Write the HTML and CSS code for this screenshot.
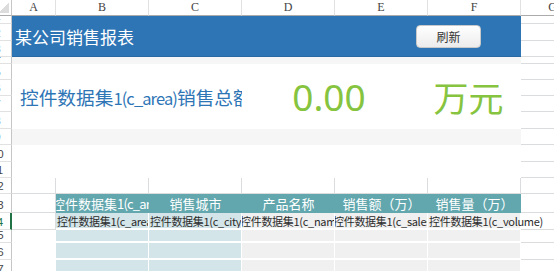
FILE: index.html
```html
<!DOCTYPE html>
<html lang="zh-CN">
<head>
  <meta charset="UTF-8" />
  <meta name="viewport" content="width=device-width, initial-scale=1.0" />
  <title>某公司销售报表</title>
  <link rel="stylesheet" href="styles.css">
</head>
<body>
  <div class="sheet">
    <!-- column headers -->
    <div class="corner"></div>
    <div class="col">A</div>
    <div class="col">B</div>
    <div class="col">C</div>
    <div class="col">D</div>
    <div class="col">E</div>
    <div class="col">F</div>
    <div class="col">G</div>

    <!-- merged blocks -->
    <div class="bar">
      <span class="title">某公司销售报表</span>
      <button class="refresh">刷新</button>
    </div>
    <div class="band band-top"></div>
    <div class="total-label"><span>控件数据集<span class="latin">1(c_area)</span>销售总额</span></div>
    <div class="total-value">0.00</div>
    <div class="total-unit">万元</div>
    <div class="band band-bottom"></div>
    <div class="blank"></div>

    <!-- rows 1-11 -->
    <div class="rh">1</div><div class="c"></div>
    <div class="rh">2</div><div class="c"></div>
    <div class="rh">3</div><div class="c"></div>
    <div class="rh">4</div><div class="c"></div>
    <div class="rh">5</div><div class="c"></div>
    <div class="rh">6</div><div class="c"></div>
    <div class="rh">7</div><div class="c"></div>
    <div class="rh">8</div><div class="c"></div>
    <div class="rh">9</div><div class="c"></div>
    <div class="rh">10</div><div class="c"></div>
    <div class="rh">11</div><div class="c"></div>

    <!-- row 12 -->
    <div class="rh">12</div>
    <div class="c"></div><div class="c"></div><div class="c"></div>
    <div class="c"></div><div class="c"></div><div class="c"></div>
    <div class="c"></div>

    <!-- row 13: table header -->
    <div class="rh">13</div>
    <div class="c"></div>
    <div class="th lead"><span>控件数据集<span class="latin">1(c_area)</span></span></div>
    <div class="th"><span>销售城市</span></div>
    <div class="th"><span>产品名称</span></div>
    <div class="th"><span>销售额（万）</span></div>
    <div class="th"><span>销售量（万）</span></div>
    <div class="c"></div>

    <!-- row 14: data -->
    <div class="rh sel">14</div>
    <div class="c"></div>
    <div class="td blue"><span>控件数据集1(c_area)</span></div>
    <div class="td blue"><span>控件数据集1(c_city)</span></div>
    <div class="td gray lead"><span>控件数据集1(c_name)</span></div>
    <div class="td gray lead"><span>控件数据集1(c_sales)</span></div>
    <div class="td gray spill"><span>控件数据集1(c_volume)</span></div>
    <div class="c"></div>

    <!-- rows 15-17 -->
    <div class="rh">15</div>
    <div class="w"></div>
    <div class="td blue"></div><div class="td blue"></div>
    <div class="td gray"></div><div class="td gray"></div><div class="td gray"></div>
    <div class="c"></div>

    <div class="rh">16</div>
    <div class="w"></div>
    <div class="td blue"></div><div class="td blue"></div>
    <div class="td gray"></div><div class="td gray"></div><div class="td gray"></div>
    <div class="c"></div>

    <div class="rh">17</div>
    <div class="w"></div>
    <div class="td blue"></div><div class="td blue"></div>
    <div class="td gray"></div><div class="td gray"></div><div class="td gray"></div>
    <div class="c"></div>
  </div>
</body>
</html>
```

FILE: styles.css
```css
* {
  box-sizing: border-box;
}
body {
  margin: 0;
  padding: 0;
  background: #fff;
  overflow: hidden;
  font-family: "Noto Sans CJK SC", sans-serif;
}
.sheet {
  margin-left: -16px;
  display: grid;
  grid-template-columns: 28px 44px repeat(5, 93px) 64px;
  grid-template-rows: 16px 8px 17px 16px 7px 16px 16px 16px 17px 16px 17px 16px 16px 19px 17px 13px 17px 17px;
}

/* headers */
.corner {
  border-right: 1px solid #c6c6c6;
  border-bottom: 1px solid #ababab;
  background: linear-gradient(to bottom right, transparent 50%, #dcdcdc 50%) no-repeat right 2px bottom 2px / 10px 10px;
}
.col {
  border-right: 1px solid #e1e1e1;
  border-bottom: 1px solid #ababab;
  font: 12px "Liberation Serif", serif;
  color: #444;
  display: flex;
  justify-content: center;
  align-items: center;
}
.rh {
  border-right: 1px solid #c6c6c6;
  border-bottom: 1px solid #e1e1e1;
  font: 11px "Liberation Sans", sans-serif;
  color: #444;
  display: flex;
  justify-content: center;
  align-items: flex-end;
  line-height: 13px;
  overflow: hidden;
}
.rh.sel {
  color: #217346;
  border-right: 2px solid #217346;
}
.c {
  border-right: 1px solid #dadcdd;
  border-bottom: 1px solid #dadcdd;
}
.w {
  background: #fff;
}

/* title bar */
.bar {
  grid-column: 2 / 8;
  grid-row: 2 / 5;
  background: #2e75b6;
  border-bottom: 1px solid #2a69a3;
  display: flex;
  align-items: center;
  justify-content: space-between;
  padding: 0 40px 0 3px;
}
.title {
  color: #fff;
  font-size: 17px;
}
.refresh {
  width: 65px;
  height: 23px;
  border: 1px solid #c9c9c9;
  border-radius: 4px;
  background: linear-gradient(#ffffff, #ececec);
  font: 12px "Noto Sans CJK SC", sans-serif;
  color: #333;
  padding: 0;
}

/* totals */
.band {
  grid-column: 2 / 8;
  background: #f6f6f6;
}
.band-top {
  grid-row: 5;
}
.band-bottom {
  grid-row: 10;
}
.blank {
  grid-column: 2 / 8;
  grid-row: 11 / 13;
  background: #fff;
}
.total-label {
  grid-column: 2 / 5;
  grid-row: 6 / 10;
  background: #fff;
  display: flex;
  align-items: center;
  padding-left: 8px;
  overflow: hidden;
  white-space: nowrap;
  color: #2e75b6;
  font-size: 18.7px;
}
.total-label .latin {
  font-size: 16.5px;
  letter-spacing: -0.9px;
}
.total-value,
.total-unit {
  grid-row: 6 / 10;
  background: #fff;
  display: flex;
  align-items: center;
  justify-content: center;
  padding-right: 12px;
  color: #86c440;
}
.total-value {
  grid-column: 5 / 7;
  font: 37px "Noto Sans", sans-serif;
}
.total-unit {
  grid-column: 7 / 8;
  font-size: 35px;
}

/* sales table */
.th {
  background: #62a7ae;
  color: #fff;
  font-size: 13px;
  display: flex;
  align-items: center;
  justify-content: center;
  overflow: hidden;
  white-space: nowrap;
}
.th.lead {
  justify-content: flex-start;
}
.th.lead span {
  margin-left: -4px;
}
.th.lead .latin {
  margin-left: 0;
  letter-spacing: -0.8px;
}
.td {
  border-right: 1px solid #fff;
  border-bottom: 2px solid #fff;
  font-size: 11px;
  letter-spacing: -0.3px;
  color: #2b2b2b;
  display: flex;
  align-items: center;
  overflow: hidden;
  white-space: nowrap;
  padding-left: 1px;
}
.td.lead span {
  margin-left: -3px;
}
.td.blue {
  background: #d3e5e9;
}
.td.gray {
  background: #f0f0f0;
}
.td.spill {
  overflow: visible;
}
```
